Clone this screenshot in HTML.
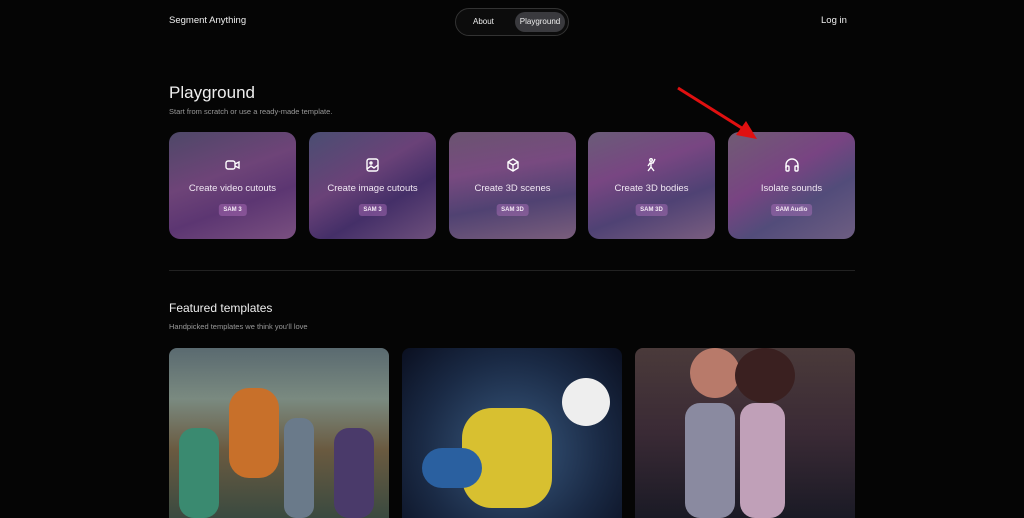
<!DOCTYPE html>
<html><head><meta charset="utf-8"><style>
*{margin:0;padding:0;box-sizing:border-box}
body{width:1024px;height:518px;background:#050505;color:#eee;font-family:"Liberation Sans",sans-serif;position:relative;overflow:hidden}
.abs{position:absolute}
.nav{left:455px;top:8px;width:114px;height:28px;border:1px solid #333;border-radius:14px;background:#0c0c0c}
.pill{left:515px;top:12px;width:50px;height:20px;border-radius:10px;background:#3a3a3e;font-size:8px;text-align:center;line-height:20px}
.card{top:132px;width:127px;height:107px;border-radius:11px;text-align:center;color:#f2e8f4}
.card svg{position:absolute;left:56px;top:26px}
.card .t{position:absolute;top:51px;left:0;right:0;font-size:9.5px}
.card .b{position:absolute;top:72px;left:50%;transform:translateX(-50%);font-size:6px;background:rgba(190,120,200,.4);padding:3px 5px;border-radius:3px;font-weight:bold}
.img{top:348px;height:170px;width:220px;border-radius:8px 8px 0 0;overflow:hidden}
</style></head><body>
<div class="abs" style="left:169px;top:15px;font-size:9.5px">Segment Anything</div>
<div class="abs nav"></div>
<div class="abs" style="left:473px;top:17px;font-size:8px">About</div>
<div class="abs pill">Playground</div>
<div class="abs" style="left:821px;top:15px;font-size:9.5px">Log in</div>
<div class="abs" style="left:169px;top:83px;font-size:17px">Playground</div>
<div class="abs" style="left:169px;top:107px;font-size:7.5px;color:#999">Start from scratch or use a ready-made template.</div>

<div class="abs card" style="left:169px;background:linear-gradient(160deg,#4e4868 0%,#6e4478 40%,#5c3672 65%,#7a5080 100%)">
<svg width="16" height="14" viewBox="0 0 16 14" fill="none" stroke="#fff" stroke-width="1.4"><rect x="1" y="3" width="9" height="8" rx="2"/><path d="M10 6l4-2v6l-4-2"/></svg>
<div class="t">Create video cutouts</div><div class="b">SAM 3</div></div>
<div class="abs card" style="left:309px;background:linear-gradient(150deg,#4a4e72 0%,#6a4278 40%,#442f68 65%,#6e507c 100%)">
<svg width="16" height="14" viewBox="0 0 16 14" fill="none" stroke="#fff" stroke-width="1.4"><rect x="2" y="1" width="11" height="12" rx="2"/><circle cx="6" cy="5" r="1"/><path d="M2 11l4-3 3 2 4-3"/></svg>
<div class="t">Create image cutouts</div><div class="b">SAM 3</div></div>
<div class="abs card" style="left:449px;background:linear-gradient(170deg,#6a5470 0%,#784a80 35%,#504272 65%,#7a5e7c 100%)">
<svg width="16" height="14" viewBox="0 0 16 14" fill="none" stroke="#fff" stroke-width="1.4"><path d="M8 1l5 3v6l-5 3-5-3V4z M3 4l5 3 5-3 M8 7v6"/></svg>
<div class="t">Create 3D scenes</div><div class="b">SAM 3D</div></div>
<div class="abs card" style="left:588px;background:linear-gradient(160deg,#6a5c78 0%,#784682 35%,#4f4274 65%,#7a5e80 100%)">
<svg width="16" height="14" viewBox="0 0 16 14" fill="none" stroke="#fff" stroke-width="1.4"><circle cx="7" cy="2" r="1.3"/><path d="M11 1l-2 4-3 0-2 3 M7 5l0 4-3 4 M7 9l3 4"/></svg>
<div class="t">Create 3D bodies</div><div class="b">SAM 3D</div></div>
<div class="abs card" style="left:728px;background:linear-gradient(150deg,#705c74 0%,#784482 40%,#524c7a 65%,#6e5e82 100%)">
<svg width="16" height="14" viewBox="0 0 16 14" fill="none" stroke="#fff" stroke-width="1.4"><path d="M2 10V7a6 6 0 0112 0v3"/><rect x="2" y="8" width="3" height="5" rx="1"/><rect x="11" y="8" width="3" height="5" rx="1"/></svg>
<div class="t">Isolate sounds</div><div class="b">SAM Audio</div></div>

<svg class="abs" style="left:0;top:0" width="1024" height="300"><line x1="678" y1="88" x2="745" y2="130" stroke="#e01010" stroke-width="3"/><polygon points="757,139 736,135 746,121" fill="#e01010"/></svg>

<div class="abs" style="left:169px;top:270px;width:686px;height:1px;background:#222"></div>
<div class="abs" style="left:169px;top:301px;font-size:12px">Featured templates</div>
<div class="abs" style="left:169px;top:322px;font-size:7.5px;color:#999">Handpicked templates we think you'll love</div>

<div class="abs img" style="left:169px;background:linear-gradient(180deg,#5a6a70 0%,#7a8a80 30%,#6a5a40 60%,#3a4a40 100%)">
<div class="abs" style="left:60px;top:40px;width:50px;height:90px;background:#c8702a;border-radius:20px"></div>
<div class="abs" style="left:10px;top:80px;width:40px;height:90px;background:#3a8a70;border-radius:15px"></div>
<div class="abs" style="left:115px;top:70px;width:30px;height:100px;background:#6a7a8a;border-radius:12px"></div>
<div class="abs" style="left:165px;top:80px;width:40px;height:90px;background:#4a3a6a;border-radius:15px"></div>
</div>
<div class="abs img" style="left:402px;background:radial-gradient(circle at 50% 60%,#3a5a80 0%,#1a2a45 60%,#0a0f20 100%)">
<div class="abs" style="left:60px;top:60px;width:90px;height:100px;background:#d8c030;border-radius:30px"></div>
<div class="abs" style="left:160px;top:30px;width:48px;height:48px;background:#eee;border-radius:50%"></div>
<div class="abs" style="left:20px;top:100px;width:60px;height:40px;background:#2a60a0;border-radius:20px"></div>
</div>
<div class="abs img" style="left:635px;background:linear-gradient(180deg,#4a3a3a 0%,#3a2a35 50%,#1a1a25 100%)">
<div class="abs" style="left:55px;top:0px;width:50px;height:50px;background:#b87a6a;border-radius:50%"></div>
<div class="abs" style="left:100px;top:0px;width:60px;height:55px;background:#3a2020;border-radius:50%"></div>
<div class="abs" style="left:50px;top:55px;width:50px;height:115px;background:#8a8aa0;border-radius:15px"></div>
<div class="abs" style="left:105px;top:55px;width:45px;height:115px;background:#c0a0b8;border-radius:15px"></div>
</div>
</body></html>
